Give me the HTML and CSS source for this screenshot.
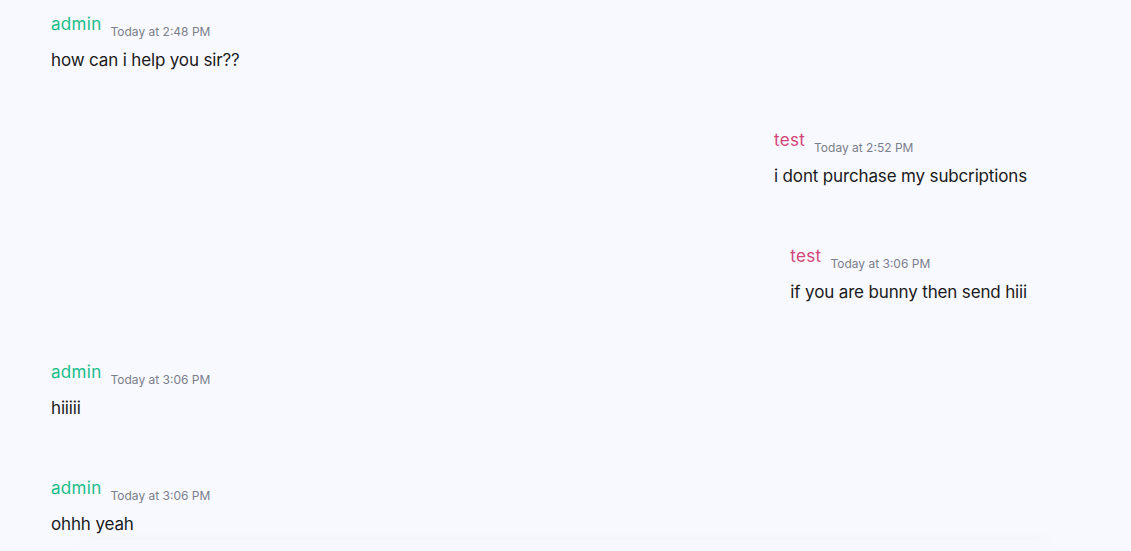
FILE: index.html
```html
<!DOCTYPE html>
<html>
<head>
<meta charset="utf-8">
<link rel="stylesheet" href="styles.css">
</head>
<body>
<div class="chat">
  <div class="msg left">
    <div class="meta"><span class="name admin">admin</span><span class="time">Today at 2:48 PM</span></div>
    <div class="text">how can i help you sir??</div>
  </div>
  <div class="msg right">
    <div class="meta"><span class="name user">test</span><span class="time">Today at 2:52 PM</span></div>
    <div class="text">i dont purchase my subcriptions</div>
  </div>
  <div class="msg right">
    <div class="meta"><span class="name user">test</span><span class="time">Today at 3:06 PM</span></div>
    <div class="text">if you are bunny then send hiii</div>
  </div>
  <div class="msg left">
    <div class="meta"><span class="name admin">admin</span><span class="time">Today at 3:06 PM</span></div>
    <div class="text">hiiiii</div>
  </div>
  <div class="msg left">
    <div class="meta"><span class="name admin">admin</span><span class="time">Today at 3:06 PM</span></div>
    <div class="text">ohhh yeah</div>
  </div>
</div>
<div class="composer"></div>
</body>
</html>
```
FILE: styles.css
```css
html, body {
  margin: 0;
  padding: 0;
  background: #f8f9fe;
  font-family: Inter, "Noto Sans", sans-serif;
}
body {
  height: 551px;
  overflow: hidden;
  display: flex;
  flex-direction: column;
}
.chat {
  display: flex;
  flex-direction: column;
  flex: 0 0 540px;
  overflow: hidden;
  padding: 12px 104px 0 51px;
  box-sizing: border-box;
}
.msg {
  display: flex;
  flex-direction: column;
  flex: 0 0 116px;
}
.msg.right {
  align-self: flex-end;
}
.meta {
  display: flex;
  align-items: flex-start;
  height: 24px;
}
.name {
  font-size: 17px;
  line-height: 24px;
  letter-spacing: 0.3px;
}
.admin { color: #17bd88; }
.user { color: #d2447a; }
.time {
  font-size: 12px;
  color: #7b7e8c;
  margin-left: 9px;
  margin-top: 12px;
  line-height: 16px;
}
.text {
  margin-top: 12px;
  font-size: 17px;
  letter-spacing: -0.15px;
  color: #1a1a20;
  line-height: 24px;
}
.composer {
  flex: 0 0 60px;
  margin: 0 80px;
  border-radius: 10px;
  background: #f7f8fd;
  box-shadow: 0 -3px 12px rgba(60, 70, 130, 0.02);
}
```
